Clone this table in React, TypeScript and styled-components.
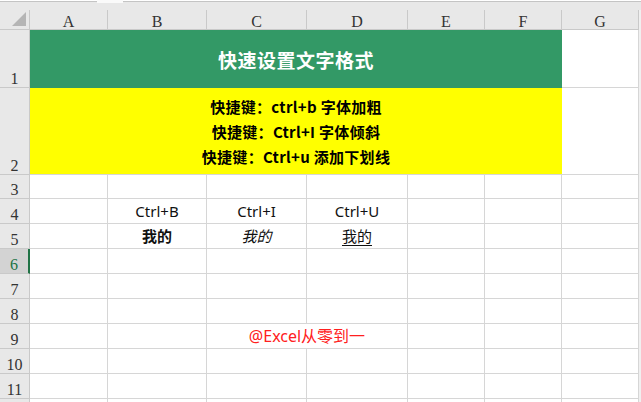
import React from "react";
import styled, { createGlobalStyle, css } from "styled-components";

const Global = createGlobalStyle`
  html, body { margin: 0; padding: 0; background: #ffffff; overflow: hidden; }
  #root { width: 641px; height: 402px; overflow: hidden; }
`;

const GRID = "#d6d6d6";
const HEAD_BG = "#e8e8e8";
const HEAD_LINE = "#c9c9c9";

const Frame = styled.div`
  width: 641px;
  height: 402px;
  overflow: hidden;
  background: #ffffff;
  display: flex;
  flex-direction: column;
`;

const TopBar = styled.div`
  height: 10px;
  flex: none;
  background: ${HEAD_BG};
  display: flex;
  align-items: flex-start;
`;

const TopLine = styled.div<{ $w: string }>`
  height: 2px;
  width: ${(p) => p.$w};
  background: #ffffff;
  border-bottom: 1px solid #c4c4c4;
  box-sizing: border-box;
`;

const TopGap = styled.div`
  width: 26px;
  height: 3px;
  background: #fafafa;
`;

const Sheet = styled.div`
  display: grid;
  grid-template-columns: 30px 78px 99px 100px 101px 77px 77px 77px 2px;
  grid-template-rows: 20px 58px 87px 24px repeat(9, 25px);
  flex: none;
`;

const headFont = css`
  font-family: "Liberation Serif", "DejaVu Serif", serif;
  font-size: 16px;
  color: #333333;
`;

const Corner = styled.div`
  background: ${HEAD_BG};
  border-right: 1px solid ${HEAD_LINE};
  border-bottom: 1px solid ${HEAD_LINE};
  box-sizing: border-box;
  position: relative;
  &::after {
    content: "";
    position: absolute;
    right: 3px;
    bottom: 3px;
    width: 0;
    height: 0;
    border-left: 14px solid transparent;
    border-bottom: 14px solid #b5b5b5;
  }
`;

const ColHead = styled.div`
  ${headFont};
  background: ${HEAD_BG};
  border-right: 1px solid ${HEAD_LINE};
  border-bottom: 1px solid ${HEAD_LINE};
  box-sizing: border-box;
  text-align: center;
  line-height: 19px;
  padding-top: 2px;
`;

const RowHead = styled.div<{ $sel?: boolean }>`
  ${headFont};
  background: ${(p) => (p.$sel ? "#d3d3d3" : HEAD_BG)};
  color: ${(p) => (p.$sel ? "#217346" : "#333333")};
  border-right: ${(p) => (p.$sel ? "2px solid #217346" : `1px solid ${HEAD_LINE}`)};
  border-bottom: 1px solid ${HEAD_LINE};
  box-sizing: border-box;
  display: flex;
  align-items: flex-end;
  justify-content: center;
  line-height: 1;
  padding-bottom: 0px;
`;

const Scroll = styled.div`
  background: #f0f0f0;
`;

const Cell = styled.div<{ $weight?: number; $italic?: boolean; $under?: boolean }>`
  border-right: 1px solid ${GRID};
  border-bottom: 1px solid ${GRID};
  box-sizing: border-box;
  font-family: "Noto Sans", "Noto Sans CJK SC", sans-serif;
  font-size: 15px;
  line-height: 24px;
  color: #111111;
  text-align: center;
  white-space: nowrap;
  font-weight: ${(p) => p.$weight ?? 400};
  font-style: ${(p) => (p.$italic ? "italic" : "normal")};
  text-decoration: ${(p) => (p.$under ? "underline" : "none")};
  text-underline-offset: 3px;
`;

const Title = styled.div`
  grid-column: 2 / 8;
  background: #339966;
  color: #ffffff;
  font-family: "Noto Sans CJK SC", "Noto Sans", sans-serif;
  font-weight: 700;
  font-size: 19px;
  letter-spacing: 0.5px;
  display: flex;
  align-items: center;
  justify-content: center;
  padding-top: 1px;
  box-sizing: border-box;
`;

const Notes = styled.div`
  grid-column: 2 / 8;
  background: #ffff00;
  border-bottom: 1px solid ${GRID};
  box-sizing: border-box;
  display: flex;
  flex-direction: column;
  align-items: center;
  justify-content: center;
  font-family: "Noto Sans CJK SC", "Noto Sans", sans-serif;
  font-weight: 700;
  font-size: 15px;
  letter-spacing: 0.3px;
  line-height: 25px;
  color: #000000;
`;

const Watermark = styled(Cell)`
  grid-column: 4 / 6;
  color: #ff2020;
  font-size: 16px;
`;

const cols = ["A", "B", "C", "D", "E", "F", "G"];

type CellDef = { text?: string; weight?: number; italic?: boolean; under?: boolean };

const row4: CellDef[] = [{}, { text: "Ctrl+B" }, { text: "Ctrl+I" }, { text: "Ctrl+U" }, {}, {}, {}];
const row5: CellDef[] = [
  {},
  { text: "我的", weight: 700 },
  { text: "我的", italic: true },
  { text: "我的", under: true },
  {},
  {},
  {},
];
const blank: CellDef[] = cols.map(() => ({}));

const renderCells = (defs: CellDef[], key: string) =>
  defs.map((d, i) => (
    <Cell key={`${key}-${i}`} $weight={d.weight} $italic={d.italic} $under={d.under}>
      {d.text}
    </Cell>
  ));

export default function App() {
  return (
    <>
      <Global />
      <Frame>
        <TopBar>
          <TopLine $w="97px" />
          <TopGap />
          <TopLine $w="518px" />
        </TopBar>
        <Sheet>
          <Corner />
          {cols.map((c) => (
            <ColHead key={c}>{c}</ColHead>
          ))}
          <Scroll />

          <RowHead>1</RowHead>
          <Title>快速设置文字格式</Title>
          <Cell />
          <Scroll />

          <RowHead>2</RowHead>
          <Notes>
            <div>快捷键：ctrl+b 字体加粗</div>
            <div>快捷键：Ctrl+I 字体倾斜</div>
            <div>快捷键：Ctrl+u 添加下划线</div>
          </Notes>
          <Cell />
          <Scroll />

          <RowHead>3</RowHead>
          {renderCells(blank, "r3")}
          <Scroll />

          <RowHead>4</RowHead>
          {renderCells(row4, "r4")}
          <Scroll />

          <RowHead>5</RowHead>
          {renderCells(row5, "r5")}
          <Scroll />

          <RowHead $sel>6</RowHead>
          {renderCells(blank, "r6")}
          <Scroll />

          <RowHead>7</RowHead>
          {renderCells(blank, "r7")}
          <Scroll />

          <RowHead>8</RowHead>
          {renderCells(blank, "r8")}
          <Scroll />

          <RowHead>9</RowHead>
          <Cell />
          <Cell />
          <Watermark>@Excel从零到一</Watermark>
          <Cell />
          <Cell />
          <Cell />
          <Scroll />

          <RowHead>10</RowHead>
          {renderCells(blank, "r10")}
          <Scroll />

          <RowHead>11</RowHead>
          {renderCells(blank, "r11")}
          <Scroll />

          <RowHead />
          {renderCells(blank, "r12")}
          <Scroll />
        </Sheet>
      </Frame>
    </>
  );
}
